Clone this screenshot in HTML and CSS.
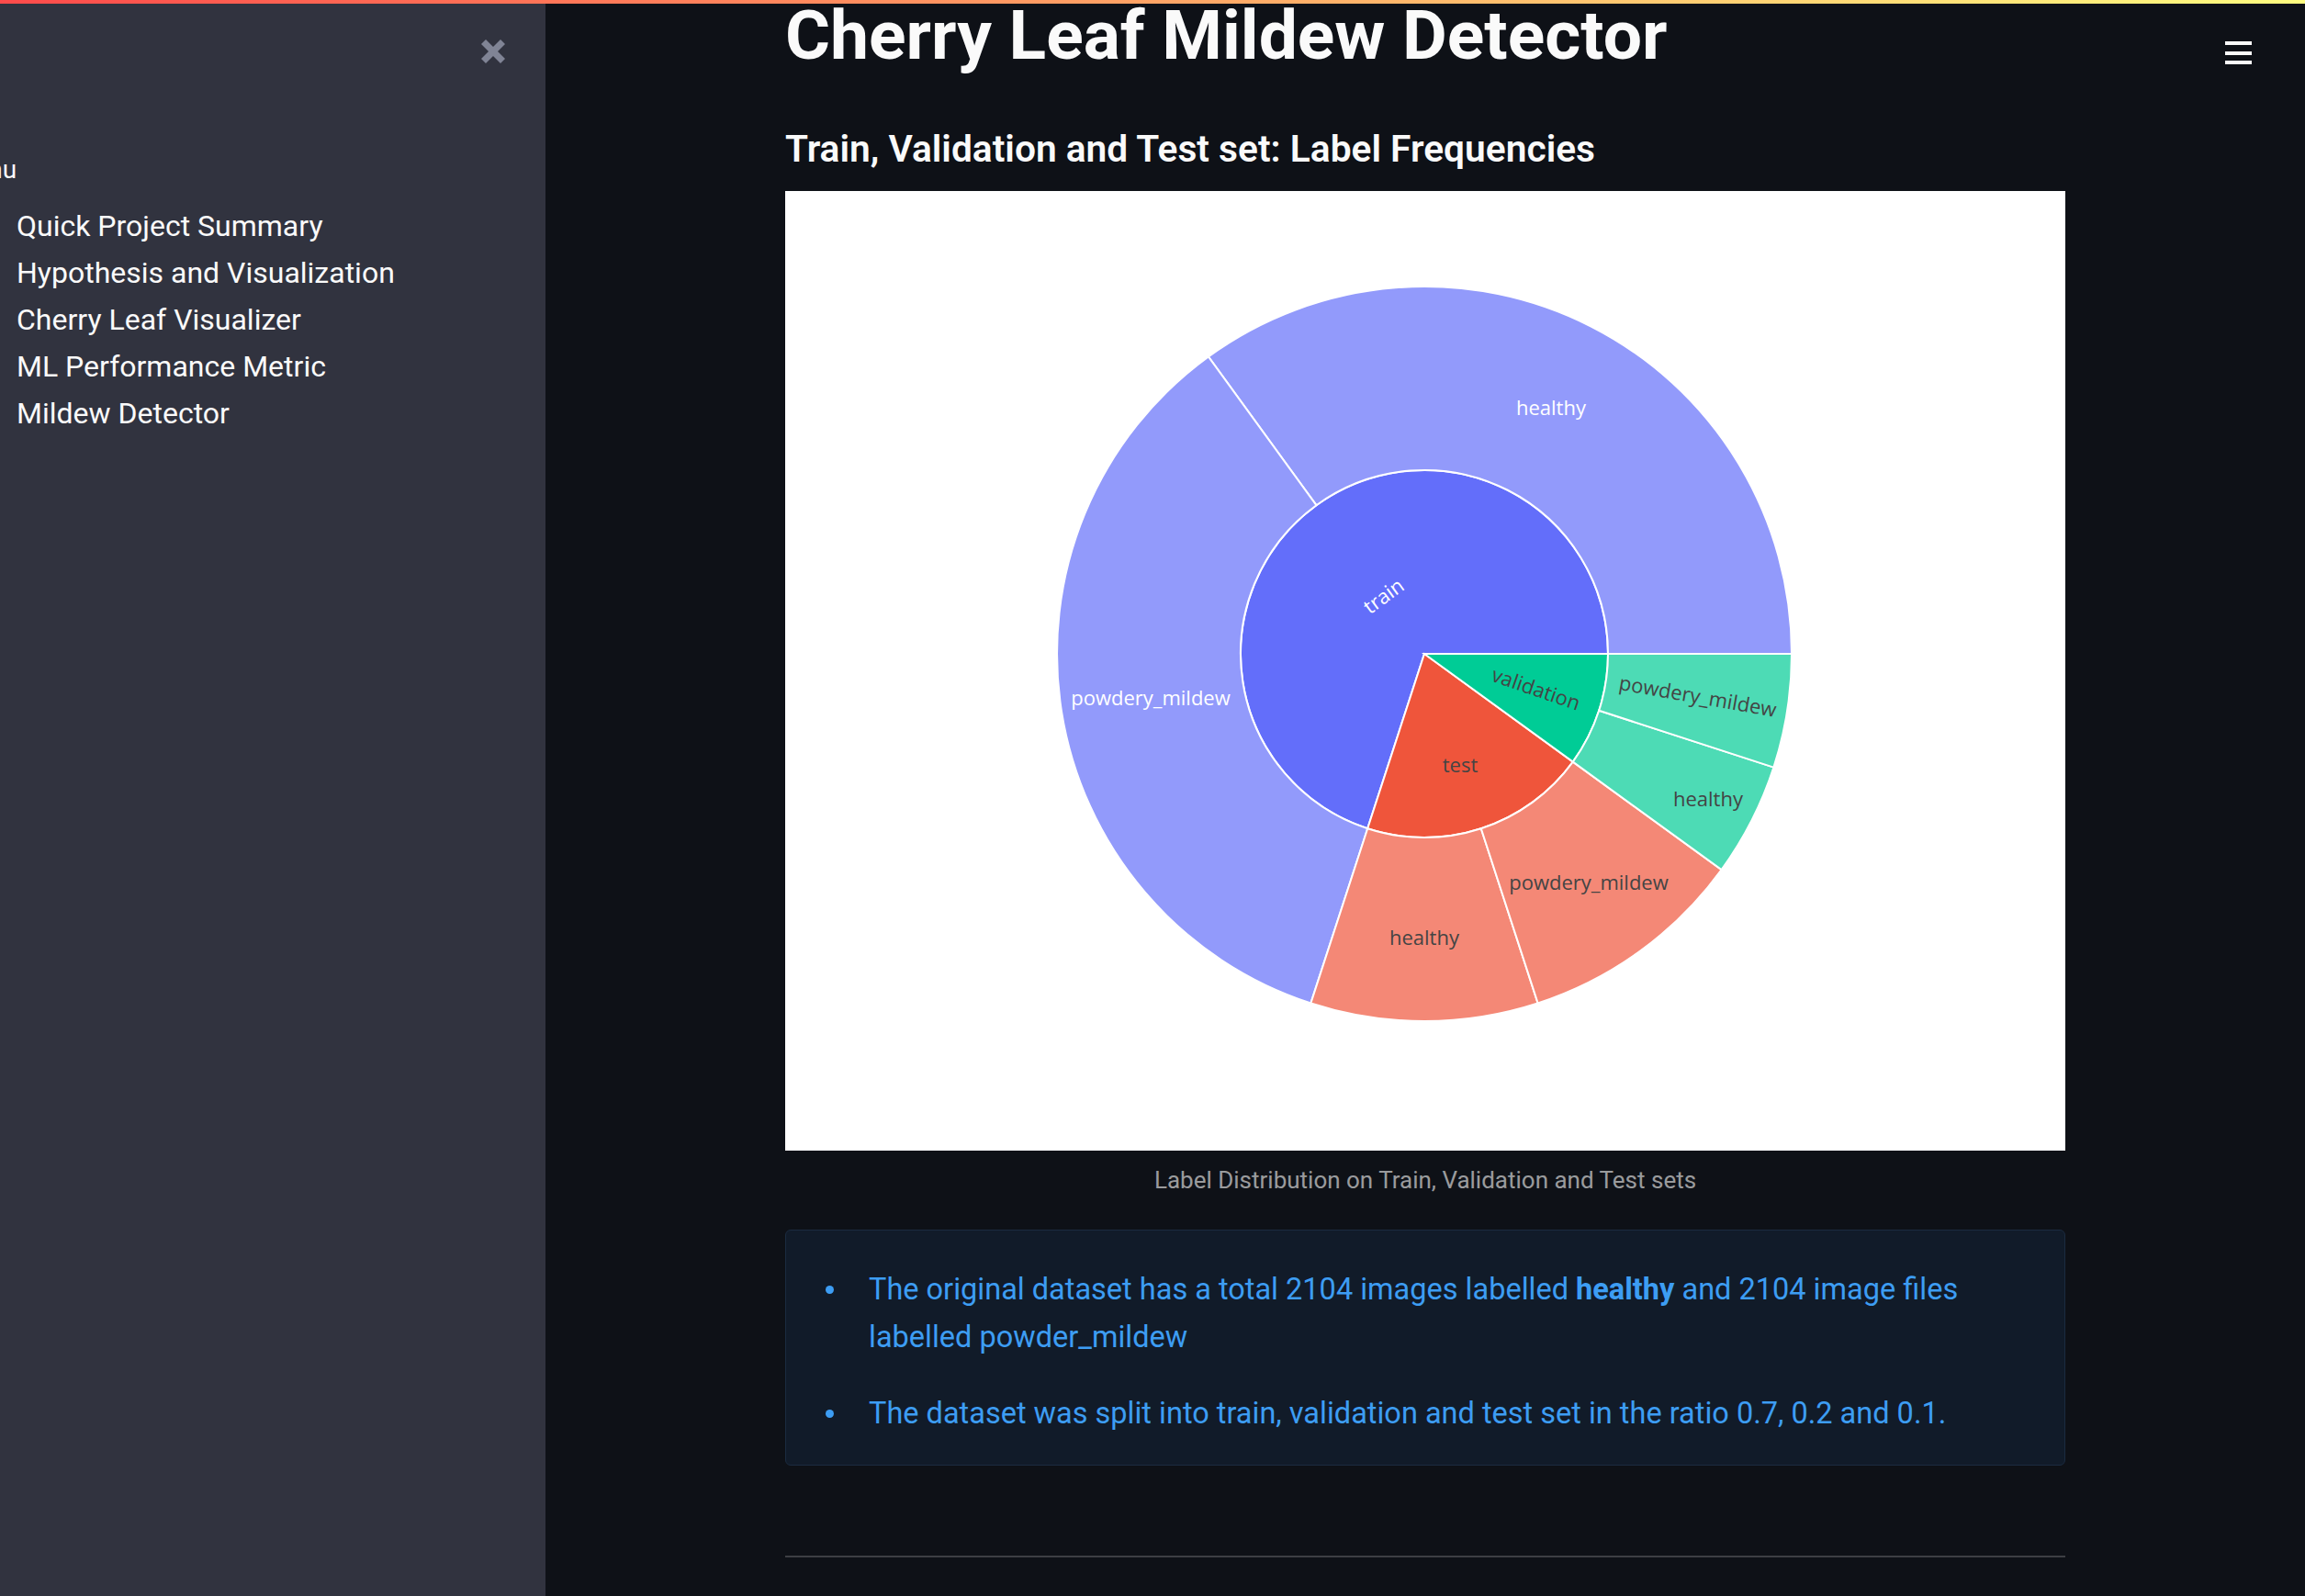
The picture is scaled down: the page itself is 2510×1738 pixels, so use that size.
FILE: index.html
```html
<!DOCTYPE html>
<html lang="en">
<head>
<meta charset="utf-8">
<title>Cherry Leaf Mildew Detector</title>
<link rel="stylesheet" href="styles.css">
</head>
<body>
<div class="decoration"></div>
<div class="app">
  <aside class="sidebar">
    <div class="sidebar-head">
      <svg class="close-icon" viewBox="0 0 28 28" width="28" height="28" aria-hidden="true">
        <line x1="3.5" y1="3.5" x2="24.5" y2="24.5"/>
        <line x1="24.5" y1="3.5" x2="3.5" y2="24.5"/>
      </svg>
    </div>
    <div class="menu-label">Menu</div>
    <ul class="nav">
      <li>Quick Project Summary</li>
      <li>Hypothesis and Visualization</li>
      <li>Cherry Leaf Visualizer</li>
      <li>ML Performance Metric</li>
      <li>Mildew Detector</li>
    </ul>
  </aside>
  <main class="main">
    <div class="toolbar">
      <span class="bar"></span><span class="bar"></span><span class="bar"></span>
    </div>
    <div class="block">
      <h1 class="title">Cherry Leaf Mildew Detector</h1>
      <h3 class="subtitle">Train, Validation and Test set: Label Frequencies</h3>
      <div class="chart">
        <svg viewBox="0 0 1394 1045" width="1394" height="1045">
          <g class="slices">
            <path fill="#636efa" d="M696,504 L896,504 A200,200 0 1 0 634.2,694.2 Z"/>
            <path fill="#ef553b" d="M696,504 L634.2,694.2 A200,200 0 0 0 857.8,621.6 Z"/>
            <path fill="#00cc96" d="M696,504 L857.8,621.6 A200,200 0 0 0 896,504 Z"/>
            <path fill="#929afb" d="M896,504 L1096,504 A400,400 0 0 0 460.9,180.4 L578.4,342.2 A200,200 0 0 1 896,504 Z"/>
            <path fill="#929afb" d="M578.4,342.2 L460.9,180.4 A400,400 0 0 0 572.4,884.4 L634.2,694.2 A200,200 0 0 1 578.4,342.2 Z"/>
            <path fill="#f48876" d="M634.2,694.2 L572.4,884.4 A400,400 0 0 0 819.6,884.4 L757.8,694.2 A200,200 0 0 1 634.2,694.2 Z"/>
            <path fill="#f48876" d="M757.8,694.2 L819.6,884.4 A400,400 0 0 0 1019.6,739.1 L857.8,621.6 A200,200 0 0 1 757.8,694.2 Z"/>
            <path fill="#4ddbb5" d="M857.8,621.6 L1019.6,739.1 A400,400 0 0 0 1076.4,627.6 L886.2,565.8 A200,200 0 0 1 857.8,621.6 Z"/>
            <path fill="#4ddbb5" d="M886.2,565.8 L1076.4,627.6 A400,400 0 0 0 1096,504 L896,504 A200,200 0 0 1 886.2,565.8 Z"/>
          </g>
          <g class="labels">
            <text class="light" x="834" y="235">healthy</text>
            <text class="light" x="398" y="551">powdery_mildew</text>
            <text class="light" x="651" y="440" transform="rotate(-36 651 440)">train</text>
            <text class="dark" x="818" y="541" transform="rotate(19 818 541)">validation</text>
            <text class="dark" x="994" y="549" transform="rotate(10 994 549)">powdery_mildew</text>
            <text class="dark" x="1005" y="661">healthy</text>
            <text class="dark" x="735" y="624">test</text>
            <text class="dark" x="875" y="752">powdery_mildew</text>
            <text class="dark" x="696" y="812">healthy</text>
          </g>
        </svg>
      </div>
      <p class="caption">Label Distribution on Train, Validation and Test sets</p>
      <div class="info">
        <ul class="info-list">
          <li><span>The original dataset has a total 2104 images labelled <strong>healthy</strong> and 2104 image files labelled powder_mildew</span></li>
          <li><span>The dataset was split into train, validation and test set in the ratio 0.7, 0.2 and 0.1.</span></li>
        </ul>
      </div>
      <hr class="divider">
    </div>
  </main>
</div>
</body>
</html>
```

FILE: styles.css
```css
* { box-sizing: border-box; }

html, body {
  margin: 0;
  padding: 0;
}

body {
  width: 2510px;
  height: 1738px;
  overflow: hidden;
  background: #0e1117;
  color: #fafafa;
  font-family: Roboto, "Liberation Sans", sans-serif;
}

.decoration {
  position: fixed;
  top: 0;
  left: 0;
  right: 0;
  height: 4px;
  background: linear-gradient(90deg, #ff4b4b, #fffd80);
  z-index: 10;
}

.app {
  display: flex;
  height: 1738px;
}

/* Sidebar */
.sidebar {
  flex: 0 0 594px;
  width: 594px;
  height: 100%;
  background: #31333f;
  overflow: hidden;
  padding: 42px 43px 0 0;
}

.sidebar-head {
  display: flex;
  justify-content: flex-end;
  height: 28px;
}

.close-icon line {
  stroke: #808495;
  stroke-width: 7;
}

.menu-label {
  margin: 95px 0 0 -52px;
  font-size: 28px;
  line-height: 40px;
  white-space: nowrap;
}

.nav {
  list-style: none;
  margin: 16px 0 0;
  padding: 0 0 0 18px;
  font-size: 32px;
  line-height: 51px;
}

.nav li {
  white-space: nowrap;
}

/* Main */
.main {
  flex: 1;
  display: flex;
  justify-content: center;
  position: relative;
}

.toolbar {
  position: absolute;
  top: 45px;
  right: 58px;
  width: 29px;
  display: flex;
  flex-direction: column;
  gap: 6.5px;
}

.toolbar .bar {
  display: block;
  height: 4px;
  background: #fafafa;
}

.block {
  width: 1394px;
  display: flex;
  flex-direction: column;
}

.title {
  margin: -6px 0 0;
  font-size: 75px;
  line-height: 89px;
  font-weight: 700;
  white-space: nowrap;
}

.subtitle {
  margin: 51px 0 0;
  font-size: 40.7px;
  line-height: 56px;
  font-weight: 600;
  white-space: nowrap;
}

.chart {
  margin-top: 18px;
  height: 1045px;
  background: #ffffff;
}

.chart svg {
  display: block;
}

.slices path {
  stroke: #ffffff;
  stroke-width: 2;
}

.labels text {
  font-family: "Open Sans", "Noto Sans", sans-serif;
  font-size: 22px;
  text-anchor: middle;
  dominant-baseline: central;
}

.labels .light { fill: #ffffff; }
.labels .dark { fill: #444444; }

.caption {
  margin: 15px 0 0;
  text-align: center;
  font-size: 26px;
  line-height: 34px;
  color: rgba(250, 250, 250, 0.6);
}

.info {
  margin-top: 37px;
  height: 257px;
  background: #111b29;
  border: 1px solid #1b2b40;
  border-radius: 6px;
  padding: 38px 40px 30px 43px;
  color: #3d9df3;
}

.info-list {
  list-style: none;
  margin: 0;
  padding: 0;
  display: flex;
  flex-direction: column;
  gap: 31px;
  font-size: 32.5px;
  line-height: 52px;
}

.info-list li {
  display: flex;
  align-items: flex-start;
}

.info-list li::before {
  content: "";
  flex: none;
  width: 9px;
  height: 9px;
  border-radius: 50%;
  background: #3d9df3;
  margin: 21.5px 38px 0 0;
}

.info-list strong {
  font-weight: 700;
}

.divider {
  margin: 98px 0 0;
  border: none;
  height: 2px;
  background: rgba(250, 250, 250, 0.2);
}
```
